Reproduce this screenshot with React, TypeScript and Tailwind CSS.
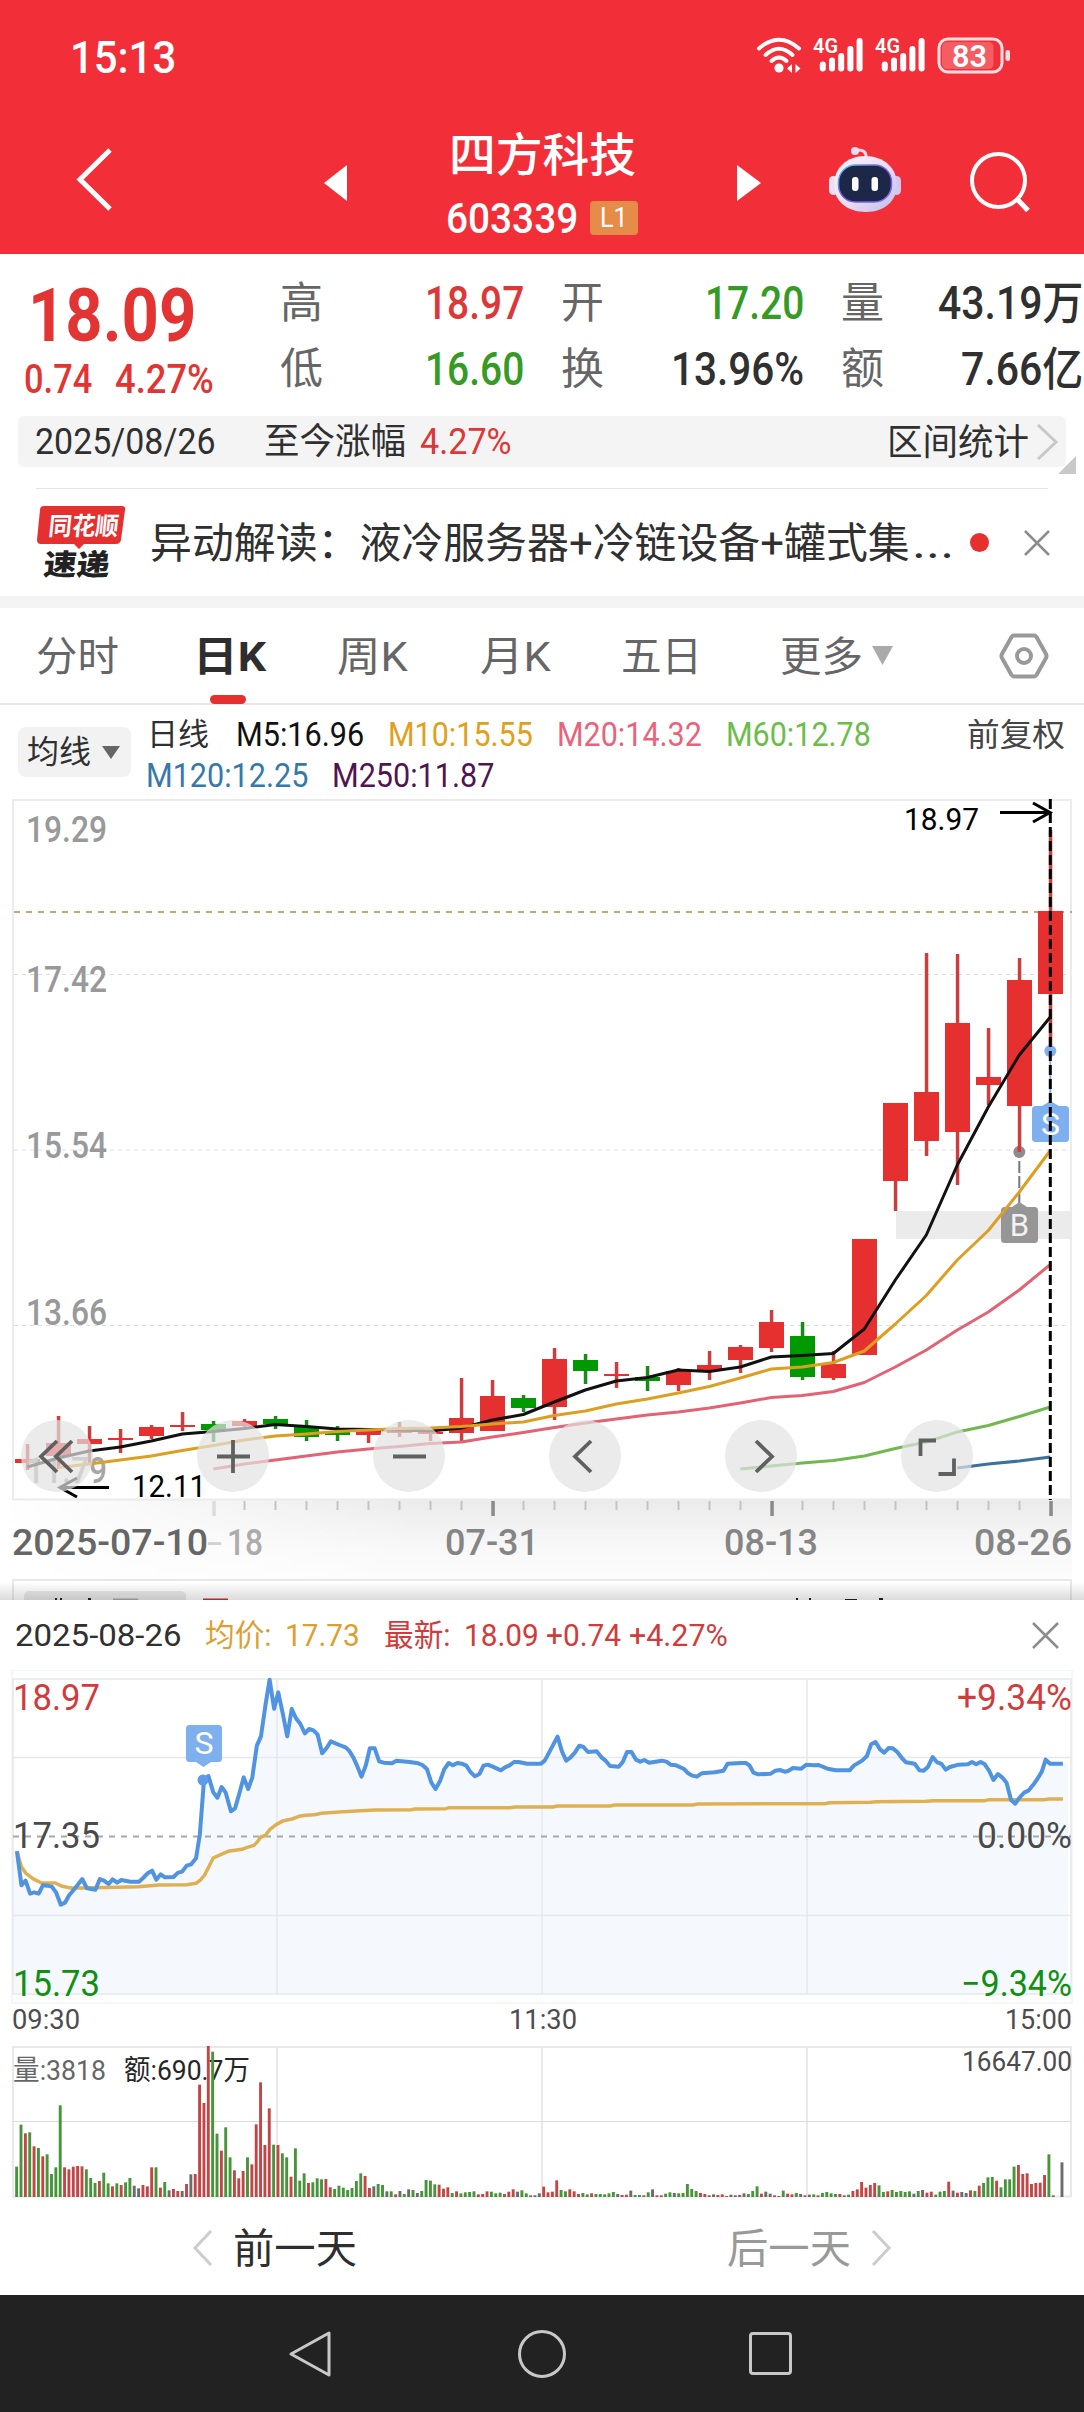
import { useLayoutEffect, useRef, useState } from "react";
import type { ReactNode } from "react";

interface FitProps {
  w: number;
  className?: string;
  children: ReactNode;
}

// single line of text, squeezed or stretched to an exact width
const Fit: React.FC<FitProps> = ({ w, className = "", children }) => {
  const ref = useRef<HTMLSpanElement>(null);
  const [scale, setScale] = useState(1);

  useLayoutEffect(() => {
    if (ref.current) setScale(w / ref.current.offsetWidth);
  }, [w]);

  return (
    <span className={`block shrink-0 whitespace-nowrap leading-none ${className}`} style={{ width: w }}>
      <span ref={ref} className="inline-block origin-left align-top" style={{ transform: `scaleX(${scale})` }}>
        {children}
      </span>
    </span>
  );
};

interface LabelProps {
  x: number;
  y: number;
  w: number;
  size: number;
  fill: string;
  weight?: number;
  children: ReactNode;
}

const Label: React.FC<LabelProps> = ({ x, y, w, size, fill, weight = 400, children }) => (
  <text x={x} y={y} textLength={w} lengthAdjust="spacingAndGlyphs" fontSize={size} fill={fill} fontWeight={weight}>
    {children}
  </text>
);

const RED = "#e63030";
const GREEN = "#009900";

// high, body top, body bottom, low, direction
const candles: [number, number, number, number, string][] = [
  [1444, 1459, 1463, 1470, "r"],
  [1416, 1443, 1456, 1469, "r"],
  [1426, 1439, 1444, 1463, "r"],
  [1429, 1438, 1440, 1453, "r"],
  [1425, 1427, 1436, 1439, "r"],
  [1412, 1425, 1427, 1431, "r"],
  [1421, 1424, 1430, 1442, "g"],
  [1419, 1421, 1426, 1427, "r"],
  [1416, 1419, 1424, 1429, "g"],
  [1420, 1426, 1437, 1441, "g"],
  [1426, 1432, 1435, 1441, "g"],
  [1432, 1431, 1435, 1443, "r"],
  [1422, 1430, 1433, 1437, "r"],
  [1430, 1432, 1434, 1441, "r"],
  [1378, 1418, 1433, 1441, "r"],
  [1380, 1396, 1431, 1431, "r"],
  [1395, 1398, 1408, 1412, "g"],
  [1348, 1359, 1407, 1420, "r"],
  [1354, 1360, 1371, 1384, "g"],
  [1362, 1374, 1376, 1388, "r"],
  [1366, 1377, 1381, 1391, "g"],
  [1368, 1371, 1385, 1391, "r"],
  [1351, 1365, 1371, 1380, "r"],
  [1345, 1347, 1360, 1373, "r"],
  [1310, 1322, 1348, 1352, "r"],
  [1322, 1336, 1377, 1380, "g"],
  [1351, 1364, 1378, 1380, "r"],
  [1239, 1239, 1355, 1355, "r"],
  [1103, 1103, 1181, 1211, "r"],
  [953, 1092, 1141, 1156, "r"],
  [954, 1023, 1132, 1185, "r"],
  [1028, 1077, 1085, 1105, "r"],
  [958, 980, 1106, 1152, "r"],
  [830, 911, 994, 1050, "r"],
];

const averages = [
  { color: "#111111", from: 0, ys: [1467, 1458, 1451, 1447, 1441, 1434, 1431.5, 1428.5, 1424.5, 1426.5, 1429, 1429.5, 1430, 1431, 1428, 1420, 1414.5, 1402, 1390, 1381, 1377.5, 1370, 1371.5, 1367, 1357, 1355.5, 1353.5, 1329, 1280, 1235, 1165, 1107, 1055, 1017] },
  { color: "#dc9f22", from: 1, ys: [1467.5, 1464, 1460, 1456, 1450.5, 1445.5, 1440, 1436, 1434, 1431.5, 1430, 1428.5, 1428, 1426.5, 1424, 1422, 1415.5, 1411, 1404, 1399, 1393, 1386.5, 1378, 1369, 1367, 1362.5, 1351, 1324, 1295.5, 1260, 1230.5, 1192, 1150.5] },
  { color: "#e16374", from: 6, ys: [1469, 1464, 1460, 1456, 1452, 1449, 1446.5, 1443.5, 1442, 1437, 1432.5, 1427.5, 1423, 1419, 1415, 1412, 1408, 1403, 1397.5, 1395.5, 1391.5, 1382.5, 1367, 1350, 1330, 1312, 1290, 1264.5] },
  { color: "#70b84f", from: 23, ys: [1469, 1466, 1463, 1460.5, 1456, 1448.5, 1442, 1432, 1425.5, 1416.5, 1407] },
  { color: "#39719f", from: 30, ys: [1468, 1464, 1461, 1457] },
];

const cx = (i: number) => 27.3 + i * 31;

const pricePoints =
  "49,784 62,886 74,872 87,911 99,907 112,911 124,886 137,887 150,890 162,907 176,944 188,938 200,916 213,900 225,884 238,867 251,894 263,897 276,899 289,867 301,872 314,882 326,868 339,878 351,870 377,875 402,875 414,864 427,850 440,842 452,869 465,853 477,862 502,861 515,848 527,845 540,827 553,823 567,805 578,735 590,572 603,558 617,607 629,623 641,591 653,608 668,664 680,655 692,612 705,562 718,597 730,562 743,467 755,439 768,345 780,269 793,356 805,307 818,370 831,439 844,357 856,384 869,402 882,430 894,417 907,421 919,434 932,490 945,474 957,454 982,465 1000,472 1010,482 1022,502 1033,527 1046,560 1058,527 1070,475 1084,475 1097,514 1110,518 1134,520 1147,512 1185,516 1210,520 1222,525 1235,537 1248,578 1260,597 1273,573 1285,538 1298,519 1310,526 1323,519 1336,521 1349,527 1361,546 1374,559 1387,552 1399,527 1411,524 1424,529 1449,541 1461,532 1474,526 1487,516 1500,516 1525,521 1565,521 1576,512 1613,440 1626,485 1638,512 1650,503 1663,488 1676,467 1688,471 1701,486 1726,484 1740,502 1752,512 1765,528 1790,530 1802,515 1814,486 1827,486 1840,509 1852,515 1864,510 1878,518 1915,512 1928,515 1940,524 1956,526 1979,537 1991,550 2003,557 2016,560 2030,550 2068,547 2093,542 2105,521 2143,519 2158,519 2168,526 2180,548 2193,553 2230,551 2243,542 2256,540 2270,545 2280,543 2294,534 2318,536 2333,524 2355,526 2368,525 2394,536 2418,541 2458,541 2470,527 2495,511 2508,498 2520,463 2533,456 2546,478 2558,488 2571,474 2583,475 2596,486 2609,504 2621,517 2646,521 2660,541 2672,542 2685,530 2698,501 2711,517 2723,521 2736,539 2748,531 2773,524 2800,523 2812,516 2824,523 2837,516 2849,523 2862,543 2874,570 2887,552 2899,562 2912,578 2925,630 2937,641 2950,622 2963,608 2975,602 2988,586 3001,567 3014,545 3025,509 3038,521 3075,521";

const avgPoints =
  "49,784 62,830 75,850 95,866 120,879 160,879 180,889 205,894 240,894 400,890 460,885 540,884 567,880 580,870 592,855 617,804 640,793 660,784 700,778 715,772 735,766 745,755 755,741 768,736 780,719 800,703 820,692 845,687 865,679 885,676 910,674 930,670 980,666 1030,663 1085,660 1190,659 1200,657 1290,656 1300,653 1475,653 1490,651 1600,651 1612,648 1765,648 1778,645 2005,645 2018,642 2385,641 2400,638 2520,637 2535,635 2680,634 2700,632 2850,632 2862,629 3020,629 3035,627 3075,627";

// bar top in thirds of a pixel, one entry per minute; base line is 561
const volumes =
  "470g 344g 370r 367g 409r 414g 439r 433g 492g 472g 286g 472r 478r 470r 468r 469r 478g 504g 519g 513r 488g 520g 529r 520g 525r 517g 504g 527k 535k 525r 529r 472r 472g 533r 516g 541k 537r 543r 543k 522r 493k 492r 224r 279r 108r 125g 371g 422r 352g 442g 481r 505r 483r 442g 463r 343r 217r 405r 295r 404g 405r 430g 442g 500r 415g 512g 490g 519r 517g 505g 508g 507r 532r 537g 527g 533g 540g 534g 513g 490g 498r 534r 529k 522g 525g 544k 544g 553r 543k 552g 538k 540g 549k 543g 510g 512g 523g 524r 536r 532r 549g 544r 550g 547g 546g 544g 553r 552r 544r 545g 550g 548g 552r 545r 538r 545k 541g 550g 556k 556k 550k 530r 547r 545r 511r 540g 544g 538r 544r 552r 549g 553g 550r 552g 552g 553g 550g 546g 552k 555r 554r 542k 555g 555g 556r 547g 538k 556r 556r 551g 547g 549k 550g 549g 522g 537g 543g 549r 552r 556k 553k 555r 553r 558r 554k 556k 555r 550k 552g 543g 529g 551r 545k 551k 556r 558r 542g 551r 553r 549g 552k 556r 554k 553g 556r 549g 546g 550g 552g 552r 556k 554g 543r 538r 516r 533r 525r 519r 526g 546g 544r 540g 546g 543g 546g 544g 551k 543g 540k 548r 545r 554g 545g 543g 515r 542k 548r 546k 549k 541r 543g 527r 519g 502g 501g 512r 532g 508g 508g 470g 465r 492r 490r 522r 519r 518r 495r 433g 556k 561k 457k".split(" ");

const volumeColors: Record<string, string> = { r: "#c24646", g: "#47943a", k: "#6b6b6b" };

const Signal = ({ x }: { x: number }) => (
  <g fill="#fff">
    <text x={x} y="26" fontSize="21" fontWeight="600" textLength="25" lengthAdjust="spacingAndGlyphs">4G</text>
    {[10, 14, 18.5, 25.5, 33.5].map((h, i) => (
      <rect key={i} x={x + 6.8 + i * 9.2} y={44.5 - h} width="6" height={h} rx="3" />
    ))}
  </g>
);

const StatusBar = () => (
  <div className="flex h-[109px] items-start justify-between pl-[70px] pr-[74px]">
    <Fit w={106} className="mt-[35px] text-[45px] font-medium">15:13</Fit>
    <svg className="mt-[27px]" width="254" height="48" viewBox="0 0 254 48">
      <g transform="translate(0 10)" fill="none" stroke="#fff" strokeWidth="4" strokeLinecap="round">
        <path d="M3 11.5Q23 -6 43 11.5" />
        <path d="M9.5 18Q23 5.500 36.500 18" />
        <path d="M15.500 24Q23 17 30.500 24" />
      </g>
      <circle cx="23" cy="41" r="4.600" fill="#fff" />
      <path d="M31 41.500l5-4.500v9zM44.500 41.500l-5-4.500v9z" fill="#fff" />
      <Signal x={57} />
      <Signal x={119} />
      <rect x="183" y="12" width="63" height="33" rx="9" fill="none" stroke="#ffe0e2" strokeWidth="3" />
      <rect x="186" y="15" width="51.500" height="27" rx="5" fill="#fff" opacity=".22" />
      <text x="196" y="40" fontSize="32" fontWeight="600" fill="#fff" textLength="35" lengthAdjust="spacingAndGlyphs">83</text>
      <rect x="249.500" y="23" width="4.500" height="11" rx="2" fill="#ffe0e2" />
    </svg>
  </div>
);

const Robot = () => (
  <svg width="72" height="68" viewBox="0 0 72 68">
    <defs>
      <linearGradient id="shell" x1="0" y1="0" x2="1" y2="1">
        <stop offset="0" stopColor="#fbf3fb" />
        <stop offset=".55" stopColor="#eadcf2" />
        <stop offset="1" stopColor="#b9bdf0" />
      </linearGradient>
      <linearGradient id="rim" x1="0" y1="0" x2="1" y2="1">
        <stop offset="0" stopColor="#5cd0e8" />
        <stop offset=".5" stopColor="#7a4fe0" />
        <stop offset="1" stopColor="#7b6bea" />
      </linearGradient>
    </defs>
    <path d="M27 4Q38 3 37 12" fill="none" stroke="#f3d9e8" strokeWidth="3" />
    <circle cx="26" cy="5" r="4" fill="#efdcee" />
    <rect x="0" y="30" width="9" height="19" rx="4.500" fill="#e9dff5" />
    <rect x="63" y="30" width="9" height="19" rx="4.500" fill="#cfc8f0" />
    <path d="M36 10C55 10 68 22 68 39C68 55 55 66 37 66C18 66 5 55 5 39C5 22 18 10 36 10Z" fill="url(#shell)" />
    <rect x="9.500" y="19" width="53" height="37" rx="17" fill="#1d2748" stroke="url(#rim)" strokeWidth="1.500" />
    <rect x="23" y="31" width="6.500" height="14" rx="3" fill="#fff" />
    <rect x="42.500" y="31" width="6.500" height="14" rx="3" fill="#fff" />
  </svg>
);

const Header = () => (
  <header className="h-[254px] bg-[#f22f38] text-white">
    <StatusBar />
    <div className="flex h-[145px] items-center">
      <svg className="ml-[76px] -mt-1" width="36" height="64" viewBox="0 0 36 64">
        <path d="M34 2L4 31.500L34 61" fill="none" stroke="#fff" strokeWidth="5" />
      </svg>
      <svg className="ml-[212px] mt-0.5" width="23" height="36" viewBox="0 0 23 36">
        <path d="M0 18L23 0V36Z" fill="#fff" />
      </svg>
      <div className="flex w-[390px] flex-col items-center pt-[8px]">
        <Fit w={187} className="text-[46px] font-medium">四方科技</Fit>
        <div className="mt-[18px] flex items-center gap-[12px]">
          <Fit w={132} className="mt-[2px] text-[42px] font-medium">603339</Fit>
          <span className="flex h-[34px] w-12 items-center justify-center rounded-[4px] bg-[#e58d48]">
            <Fit w={28} className="text-[28px]">L1</Fit>
          </span>
        </div>
      </div>
      <svg className="mt-0.5" width="24" height="36" viewBox="0 0 24 36">
        <path d="M24 18L0 0V36Z" fill="#fff" />
      </svg>
      <div className="ml-[68px] -mt-1">
        <Robot />
      </div>
      <svg className="ml-[69px]" width="60" height="60" viewBox="0 0 60 60">
        <circle cx="28.500" cy="28.500" r="26.500" fill="none" stroke="#fff" strokeWidth="4" />
        <path d="M47 47L58 58.500" stroke="#fff" strokeWidth="5" />
      </svg>
    </div>
  </header>
);

const Quote = () => (
  <section className="flex h-[162px] text-[46px] font-medium text-[#303030]">
    <div className="w-[280px] text-[#e33434]">
      <Fit w={168} className="ml-[28px] mt-[25px] text-[74px] font-bold">18.09</Fit>
      <div className="mt-[7px] flex gap-[23px] pl-[24px] text-[40px]">
        <Fit w={68}>0.74</Fit>
        <Fit w={99}>4.27%</Fit>
      </div>
    </div>
    <div className="flex flex-col pt-[16px]">
      <div className="flex h-[66px] items-center">
        <Fit w={43} className="text-[43px] font-normal text-[#666]">高</Fit>
        <Fit w={99} className="ml-[102px] text-[#dc3838]">18.97</Fit>
        <Fit w={43} className="ml-[37px] text-[43px] font-normal text-[#666]">开</Fit>
        <Fit w={99} className="ml-[101px] text-[#359b24]">17.20</Fit>
        <Fit w={43} className="ml-[37px] text-[43px] font-normal text-[#666]">量</Fit>
        <Fit w={145} className="ml-[54px]">43.19万</Fit>
      </div>
      <div className="flex h-[66px] items-center">
        <Fit w={43} className="text-[43px] font-normal text-[#666]">低</Fit>
        <Fit w={99} className="ml-[102px] text-[#359b24]">16.60</Fit>
        <Fit w={43} className="ml-[37px] text-[43px] font-normal text-[#666]">换</Fit>
        <Fit w={133} className="ml-[67px]">13.96%</Fit>
        <Fit w={43} className="ml-[37px] text-[43px] font-normal text-[#666]">额</Fit>
        <Fit w={122} className="ml-[77px]">7.66亿</Fit>
      </div>
    </div>
  </section>
);

const RangeBar = () => (
  <section className="relative h-[73px] px-[18px]">
    <div className="flex h-[51px] items-center rounded-md bg-[#f4f4f4] text-[36px] text-[#303030]">
      <Fit w={181} className="ml-[17px]">2025/08/26</Fit>
      <Fit w={142} className="ml-[48px]">至今涨幅</Fit>
      <Fit w={92} className="ml-[14px] text-[#dc3838]">4.27%</Fit>
      <Fit w={142} className="ml-auto mt-[3px]">区间统计</Fit>
      <svg className="ml-[7px] mr-[6px]" width="24" height="36" viewBox="0 0 24 36">
        <path d="M2 1L20 18L2 35" fill="none" stroke="#c8c8c8" strokeWidth="3" />
      </svg>
    </div>
    <svg className="absolute left-[1058px] top-[40px]" width="18" height="18" viewBox="0 0 18 18">
      <path d="M18 0V18H0Z" fill="#c9c9c9" />
    </svg>
    <div className="mx-[18px] mt-[21px] h-px bg-[#e4e4e4]" />
  </section>
);

const News = () => (
  <section className="flex h-[107px]">
    <div className="relative ml-[37px] mt-[17px] w-[90px]">
      <svg className="absolute left-0 top-0" width="90" height="44" viewBox="0 0 90 44">
        <path d="M7 0H85Q89 0 88 4L84 34Q83 38 79 38H47L42 43L37 38H4Q0 38 0 34L3 4Q3 0 7 0Z" fill="#e63030" />
      </svg>
      <div className="relative flex flex-col -skew-x-6 font-black">
        <Fit w={70} className="ml-[10px] mt-[8px] text-[25px] font-bold text-white">同花顺</Fit>
        <Fit w={66} className="ml-[9px] mt-[12px] text-[29px] text-[#222]">速递</Fit>
      </div>
    </div>
    <Fit w={760} className="ml-[23px] mt-[34px] text-[42px] text-[#303030]">异动解读：液冷服务器+冷链设备+罐式集</Fit>
    <Fit w={42} className="ml-[2px] mt-[34px] text-[42px] text-[#303030]">...</Fit>
    <span className="ml-[16px] mt-[44px] size-[19px] rounded-full bg-[#e63030]" />
    <svg className="ml-[35px] mt-[41px]" width="26" height="26" viewBox="0 0 26 26">
      <path d="M1 1L25 25M25 1L1 25" stroke="#8c8c8c" strokeWidth="2.500" />
    </svg>
  </section>
);

const Tabs = () => (
  <nav className="relative flex h-[97px] items-center border-b-2 border-[#e8e8e8] text-[41px] text-[#666]">
    <Fit w={83} className="ml-[36px] mt-[4px]">分时</Fit>
    <Fit w={73} className="ml-[74px] mt-[4px] font-bold text-[#2e2e2e]">日K</Fit>
    <Fit w={71} className="ml-[71px] mt-[4px]">周K</Fit>
    <Fit w={71} className="ml-[72px] mt-[4px]">月K</Fit>
    <Fit w={81} className="ml-[70px] mt-[4px]">五日</Fit>
    <Fit w={83} className="ml-[78px] mt-[4px]">更多</Fit>
    <svg className="ml-[8px]" width="23" height="19" viewBox="0 0 23 19">
      <path d="M1 0H22L11.500 19Z" fill="#aaa" />
    </svg>
    <svg className="ml-[105px]" width="50" height="46" viewBox="0 0 50 46">
      <path d="M15 2.500H35Q36.500 2.500 37.500 4L47 21Q48 23 47 25L37.500 42Q36.500 43.500 35 43.500H15Q13.500 43.500 12.500 42L3 25Q2 23 3 21L12.500 4Q13.500 2.500 15 2.500Z" fill="none" stroke="#999" strokeWidth="4" />
      <circle cx="25" cy="23" r="7" fill="none" stroke="#999" strokeWidth="4" />
    </svg>
    <span className="absolute left-[210px] top-[87px] h-[9px] w-[36px] rounded-full bg-[#e63030]" />
  </nav>
);

const Legend = () => (
  <section className="flex h-[94px] text-[33px]">
    <div className="ml-[18px] mt-[22px] flex h-[50px] w-[113px] items-center rounded-lg bg-[#f2f2f2] pl-[9px] text-[#303030]">
      <Fit w={64} className="text-[32px]">均线</Fit>
      <svg className="ml-[11px]" width="18" height="13" viewBox="0 0 18 13">
        <path d="M0 0H18L9 13Z" fill="#666" />
      </svg>
    </div>
    <div className="ml-[16px] mt-[13px] flex flex-col gap-[8px]">
      <div className="flex h-[33px] items-center">
        <Fit w={62} className="text-[31px] text-[#303030]">日线</Fit>
        <Fit w={128} className="ml-[27px] text-[#111]">M5:16.96</Fit>
        <Fit w={145} className="ml-[24px] text-[#dfa01c]">M10:15.55</Fit>
        <Fit w={145} className="ml-[24px] text-[#e9637a]">M20:14.32</Fit>
        <Fit w={145} className="ml-[24px] text-[#6cbd4a]">M60:12.78</Fit>
        <Fit w={98} className="ml-[96px] text-[32px] text-[#444]">前复权</Fit>
      </div>
      <div className="flex h-[33px] items-center gap-[24px]">
        <Fit w={162} className="-ml-px text-[#3579a8]">M120:12.25</Fit>
        <Fit w={162} className="text-[#4f1552]">M250:11.87</Fit>
      </div>
    </div>
  </section>
);

const buttonIcons = [
  "M36 21L20 36.500L36 52M51 21L35 36.500L51 52",
  "M36 20V53M20 36.500H53",
  "M20 36.500H53",
  "M42 21L26 36.500L42 52",
  "M31 21L47 36.500L31 52",
  "M19.500 36V20.500H35M37.500 54H53V38.500",
];

const KLine = () => (
  <section className="relative h-[801px]">
    <svg className="block" width="1084" height="801" viewBox="0 799 1084 801">
      <defs>
        <linearGradient id="axis" x1="0" y1="0" x2="0" y2="1">
          <stop offset="0" stopColor="#ebebeb" />
          <stop offset=".65" stopColor="#f9f9f9" />
          <stop offset="1" stopColor="#fcfcfc" />
        </linearGradient>
        <linearGradient id="fade" x1="0" y1="0" x2="1" y2="0">
          <stop offset="0" stopColor="#fff" />
          <stop offset="1" stopColor="#fff" stopOpacity="0" />
        </linearGradient>
        <linearGradient id="shadow" x1="0" y1="0" x2="0" y2="1">
          <stop offset="0" stopColor="#000" stopOpacity="0" />
          <stop offset="1" stopColor="#000" stopOpacity=".14" />
        </linearGradient>
      </defs>

      <rect x="0" y="1500" width="1072" height="79" fill="url(#axis)" />
      <rect x="0" y="1500" width="420" height="79" fill="url(#fade)" />
      <rect x="13" y="800" width="1058" height="699.500" fill="none" stroke="#ebebeb" strokeWidth="2" />
      <g stroke="#dcdcdc" strokeDasharray="4 4">
        <path d="M14 974.500H1070" />
        <path d="M14 1150H1070" />
        <path d="M14 1325.500H1070" />
      </g>
      <path d="M14 912H1072" stroke="#c2a878" strokeWidth="2" strokeDasharray="6 6" />
      <rect x="896" y="1211" width="176" height="28" fill="#ebebeb" />

      {candles.map(([high, top, bottom, low, dir], i) => (
        <g key={i} fill={dir === "r" ? RED : GREEN}>
          <rect x={cx(i) - 1.5} y={high} width="3.500" height={low - high} fill={dir === "r" ? "#cb3e3e" : "#1a8a1a"} />
          <rect x={cx(i) - 12.3} y={top} width="25" height={bottom - top} />
        </g>
      ))}

      <Label x={26} y={842} w={81} size={36} weight={500} fill="#999">19.29</Label>
      <Label x={26} y={992} w={81} size={36} weight={500} fill="#999">17.42</Label>
      <Label x={26} y={1158} w={81} size={36} weight={500} fill="#999">15.54</Label>
      <Label x={26} y={1325} w={81} size={36} weight={500} fill="#999">13.66</Label>
      <Label x={26} y={1483} w={81} size={36} weight={500} fill="#a6a6a6">11.79</Label>

      <circle cx="1050.300" cy="1051" r="6" fill="#7eb0f0" />
      <path d="M1050.300 1051V1104" stroke="#7eb0f0" strokeWidth="2" />
      <circle cx="1019.300" cy="1152" r="6" fill="#8c8c8c" />
      <path d="M1019.300 1146V1152" stroke={RED} strokeWidth="3.500" />
      <path d="M1019.300 1161V1204" stroke="#777" strokeWidth="2" strokeDasharray="12 3" />
      <path d="M1012 1207L1019.500 1202L1027 1207Z" fill="#969696" />
      <rect x="1001" y="1207" width="37" height="36" rx="3.500" fill="#969696" />
      <text x="1019.500" y="1236" fontSize="31" textAnchor="middle" fill="#f2f2f2">B</text>
      <path d="M1042 1106L1050.300 1101L1059 1106Z" fill="#7eb0f0" />
      <rect x="1032" y="1106" width="37" height="36" rx="3.500" fill="#7eb0f0" />
      <text x="1050.500" y="1135" fontSize="32" textAnchor="middle" fill="#fff">S</text>

      {averages.map((line) => (
        <polyline
          key={line.color}
          points={line.ys.map((y, i) => `${cx(line.from + i)},${y}`).join(" ")}
          fill="none"
          stroke={line.color}
          strokeWidth="3"
          strokeLinejoin="round"
        />
      ))}

      <path d="M1050.300 799V1500" stroke="#000" strokeWidth="3" strokeDasharray="10 4" />
      <g stroke="#000" strokeWidth="3" fill="none">
        <path d="M1000 812.500H1049M1033 803L1050 812.500L1033 822" />
        <path d="M109 1487.500H60M77 1478L60 1487.500L77 1497" />
      </g>
      <Label x={904} y={830} w={75} size={31} fill="#000">18.97</Label>
      <Label x={132} y={1497} w={74} size={31} fill="#000">12.11</Label>

      {candles.map((_, i) =>
        i < 6 ? null : i % 9 === 6 ? (
          <rect key={i} x={cx(i) - 1} y="1501" width="3.500" height="15" fill={i === 6 ? "#ddd" : "#8a8a8a"} />
        ) : (
          <rect key={i} x={cx(i) - 0.8} y="1501" width="2" height="9" fill="#c4c4c4" />
        )
      )}
      <Label x={12} y={1555} w={196} size={36} weight={500} fill="#666">2025-07-10</Label>
      <Label x={207} y={1555} w={15} size={36} fill="#d0d0d0">-</Label>
      <Label x={227} y={1555} w={36} size={36} weight={500} fill="#acacac">18</Label>
      <Label x={445} y={1555} w={94} size={36} weight={500} fill="#858585">07-31</Label>
      <Label x={724} y={1555} w={94} size={36} weight={500} fill="#858585">08-13</Label>
      <Label x={974} y={1555} w={98} size={36} weight={500} fill="#858585">08-26</Label>

      {/* next indicator panel, hidden under the day sheet */}
      <path d="M13 1600V1580H1071V1600" fill="#fff" stroke="#e8e8e8" strokeWidth="2" />
      <path d="M24 1600V1596Q24 1591 30 1591H180Q186 1591 186 1596V1600Z" fill="#e9e9e9" />
      <g fill="#222">
        <rect x="55" y="1598" width="2" height="2" />
        <rect x="60" y="1598" width="2" height="2" />
        <rect x="88" y="1598" width="3" height="2" />
        <rect x="796" y="1598" width="2" height="2" />
        <rect x="809" y="1598" width="2" height="2" />
        <rect x="845" y="1599" width="12" height="1" />
        <rect x="879" y="1598" width="4" height="2" />
      </g>
      <rect x="113" y="1598.500" width="25" height="1.500" fill="#aaa" />
      <rect x="203" y="1598.500" width="25" height="1.500" fill="#d03030" />
      <rect x="0" y="1582" width="1084" height="18" fill="url(#shadow)" />
    </svg>
    <div className="absolute left-[21px] top-[621px] flex gap-[104px]">
      {buttonIcons.map((d) => (
        <button key={d} className="size-[72px] rounded-full bg-[#e3e3e3]/70">
          <svg width="72" height="72" viewBox="0 0 72 72">
            <path d={d} fill="none" stroke="#606060" strokeWidth="3.800" />
          </svg>
        </button>
      ))}
    </div>
  </section>
);

const DayHeader = () => (
  <div className="flex h-[70px] items-center pl-[15px] text-[31px] text-[#d03c3c]">
    <Fit w={167} className="text-[#303030]">2025-08-26</Fit>
    <Fit w={67} className="ml-[23px] text-[#dca030]">均价:</Fit>
    <Fit w={75} className="ml-[13px] text-[#dca030]">17.73</Fit>
    <Fit w={67} className="ml-[24px]">最新:</Fit>
    <Fit w={75} className="ml-[13px]">18.09</Fit>
    <Fit w={75} className="ml-[7px]">+0.74</Fit>
    <Fit w={99} className="ml-[8px]">+4.27%</Fit>
    <svg className="ml-auto mr-[25px]" width="27" height="27" viewBox="0 0 27 27">
      <path d="M1 1L26 26M26 1L1 26" stroke="#8c8c8c" strokeWidth="2.500" />
    </svg>
  </div>
);

const Intraday = () => (
  <svg className="block" width="1084" height="530" viewBox="0 1670 1084 530">
    <rect x="12" y="1670" width="1060" height="333" fill="none" stroke="#f4f4f4" strokeWidth="1.500" />
    <g transform="translate(0 1590) scale(.34566 .33333)">
      <polygon points={`49,1212 ${pricePoints} 3090,521 3090,1212`} fill="#f5f9fe" />
    </g>
    <path d="M14 1848L17 1851V1994H14Z" fill="#f5f9fe" />
    <g fill="none" stroke="#e6e8eb" strokeWidth="1.500">
      <rect x="13" y="1679" width="1058" height="315" />
      <path d="M13 1757.500H1071M13 1915.500H1071M277 1679V1994M542 1679V1994M807 1679V1994" />
    </g>
    <path d="M13 1836.500H1071" stroke="#a5a8ab" strokeWidth="2" strokeDasharray="6 6" />
    <g transform="translate(0 1590) scale(.34566 .33333)" fill="none" strokeLinejoin="round">
      <polyline points={avgPoints} stroke="#dfb052" strokeWidth="3.500" vectorEffect="non-scaling-stroke" />
      <polyline points={pricePoints} stroke="#5093e0" strokeWidth="4" vectorEffect="non-scaling-stroke" />
    </g>
    <circle cx="203" cy="1780" r="5.500" fill="#5c9aec" />
    <rect x="186" y="1725" width="36" height="37" rx="3.500" fill="#7eb0f0" />
    <path d="M196 1762H211L203.500 1767Z" fill="#7eb0f0" />
    <text x="204" y="1754" fontSize="32" textAnchor="middle" fill="#fff">S</text>

    <Label x={13} y={1710} w={87} size={36} fill="#d03c3c">18.97</Label>
    <Label x={13} y={1848} w={87} size={36} fill="#4a4a4a">17.35</Label>
    <Label x={13} y={1996} w={87} size={36} fill="#109010">15.73</Label>
    <Label x={957} y={1710} w={115} size={36} fill="#d03c3c">+9.34%</Label>
    <Label x={977} y={1848} w={95} size={36} fill="#4a4a4a">0.00%</Label>
    <Label x={961} y={1996} w={111} size={36} fill="#109010">−9.34%</Label>
    <Label x={12} y={2029} w={68} size={28} fill="#4d4d4d">09:30</Label>
    <Label x={509} y={2029} w={68} size={28} fill="#4d4d4d">11:30</Label>
    <Label x={1005} y={2029} w={67} size={28} fill="#4d4d4d">15:00</Label>

    <g fill="none" stroke="#e9e9e9" strokeWidth="2">
      <rect x="13" y="2047" width="1058" height="149.500" />
      <path d="M277 2047V2197M542 2047V2197M807 2047V2197" />
      <path d="M13 2121.500H1071" stroke="#dcdcdc" strokeWidth="1" />
    </g>
    <Label x={13} y={2080} w={93} size={28} fill="#666">量:3818</Label>
    <Label x={124} y={2080} w={126} size={28} fill="#262626">额:690.7万</Label>
    <Label x={962} y={2071} w={110} size={28} fill="#4d4d4d">16647.00</Label>
    {volumes.map((v, i) => {
      const h = (561 - parseInt(v)) / 3;
      return <rect key={i} x={15.2 + i * 4.3555} y={2197 - h} width="2.900" height={h} fill={volumeColors[v[3]]} />;
    })}
  </svg>
);

const DaySwitch = () => (
  <div className="flex h-[95px] items-center text-[41px]">
    <svg className="ml-[192px]" width="21" height="36" viewBox="0 0 21 36">
      <path d="M19 1L3 18L19 35" fill="none" stroke="#ccc" strokeWidth="3" />
    </svg>
    <Fit w={124} className="ml-[20px] mt-[3px] text-[#2e2e2e]">前一天</Fit>
    <Fit w={124} className="ml-[370px] mt-[3px] text-[#999]">后一天</Fit>
    <svg className="ml-[20px]" width="21" height="36" viewBox="0 0 21 36">
      <path d="M2 1L18 18L2 35" fill="none" stroke="#ccc" strokeWidth="3" />
    </svg>
  </div>
);

const NavBar = () => (
  <footer className="flex h-[117px] items-center bg-[#222222]">
    <svg className="ml-[287px]" width="46" height="50" viewBox="0 0 46 50">
      <path d="M42 4V46L4 25Z" fill="none" stroke="#c8c8c8" strokeWidth="3" strokeLinejoin="round" />
    </svg>
    <span className="ml-[185px] size-[48px] rounded-full border-[3px] border-[#c8c8c8]" />
    <span className="ml-[183px] size-[43px] rounded-sm border-[3px] border-[#c8c8c8]" />
  </footer>
);

const App = () => {
  return (
    <div lang="zh-CN" className="w-[1084px] overflow-hidden bg-white font-[Roboto,'Noto_Sans_CJK_SC',sans-serif]">
      <Header />
      <Quote />
      <RangeBar />
      <News />
      <div className="h-[12px] bg-[#f4f4f4]" />
      <Tabs />
      <Legend />
      <KLine />
      <section className="bg-white">
        <DayHeader />
        <Intraday />
        <DaySwitch />
      </section>
      <NavBar />
    </div>
  );
};

export default App;
